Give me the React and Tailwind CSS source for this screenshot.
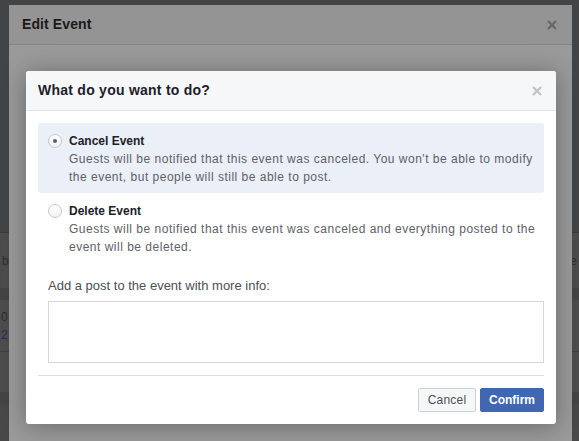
import React, { useState } from "react";

const font = { fontFamily: '"Liberation Sans", Arial, Helvetica, sans-serif' };

function CloseIcon({ className }) {
  return (
    <svg width="10" height="10" viewBox="0 0 10 10" className={className}>
      <path d="M1 1 L9 9 M9 1 L1 9" stroke="currentColor" strokeWidth="2.2" strokeLinecap="butt" />
    </svg>
  );
}

function Radio({ checked }) {
  return (
    <span className="mt-[2px] flex h-[14px] w-[14px] shrink-0 items-center justify-center rounded-full border border-[#c4c7cc] bg-gradient-to-b from-white to-[#f1f2f4]">
      {checked && <span className="h-[4px] w-[4px] rounded-full bg-[#5b5f66]" />}
    </span>
  );
}

function Option({ title, desc, checked, onSelect }) {
  return (
    <div
      onClick={onSelect}
      className={`flex cursor-pointer gap-[7px] rounded-[3px] pl-[10px] pr-[6px] pt-[9px] pb-[7px] ${
        checked ? "bg-[#ebeff7]" : ""
      }`}
    >
      <Radio checked={checked} />
      <div className="text-[12px] leading-[18px]">
        <div className="font-bold text-[#1d2129]">{title}</div>
        <div className="tracking-[0.5px] text-[#5d6169]">{desc}</div>
      </div>
    </div>
  );
}

// dimmed page content peeking out on both sides of the dialog
function PageBehind() {
  return (
    <div className="flex h-full flex-col text-[12px]">
      <div className="h-[233px] shrink-0 border-b border-[#3a3a3b] bg-[#434446]" />
      <div className="flex h-[55px] shrink-0 items-center justify-between bg-[#4c4c4d] px-[2px] text-[#2e2e2e]">
        <span>b</span>
        <span>e</span>
      </div>
      <div className="h-[12px] shrink-0 bg-[#444445]" />
      <div className="flex h-[52px] shrink-0 flex-col justify-center border-b border-[#3f3f40] bg-[#4d4d4e] px-[1px] leading-[18px]">
        <span className="text-[#2c2c2c]">0</span>
        <span className="text-[#1f2f55]">2</span>
      </div>
      <div className="h-[40px] shrink-0 bg-[#4d4d4e]" />
      <div className="h-[12px] shrink-0 bg-[#444445]" />
      <div className="flex-1 bg-[#484849]" />
    </div>
  );
}

export default function App() {
  const [choice, setChoice] = useState("cancel");

  return (
    <div className="relative h-[441px] w-full overflow-hidden bg-[#434446]" style={font}>
      <PageBehind />

      <div className="absolute left-[9px] top-[5px] bottom-0 w-[563px] rounded-t-[3px] bg-[#9a9a9a]">
        <div className="flex h-[40px] items-center justify-between border-b border-[#858585] bg-[#949494] pl-[13px] pr-[15px]">
          <span className="text-[14px] font-bold tracking-[0.1px] text-[#1a1a1b]">Edit Event</span>
          <CloseIcon className="text-[#676767]" />
        </div>

        <div className="pl-[17px] pt-[26px]">
          <div className="w-[530px] rounded-[3px] bg-white shadow-[0_2px_24px_rgba(0,0,0,0.32)]">
            <div className="flex h-[40px] items-center justify-between rounded-t-[3px] border-b border-[#e5e5e5] bg-[#f6f7f9] pl-[12px] pr-[14px]">
              <span className="text-[14px] font-bold tracking-[0.25px] text-[#1d2129]">
                What do you want to do?
              </span>
              <CloseIcon className="text-[#bfc2c8]" />
            </div>

            <div className="p-[12px]">
              <Option
                title="Cancel Event"
                desc="Guests will be notified that this event was canceled. You won't be able to modify the event, but people will still be able to post."
                checked={choice === "cancel"}
                onSelect={() => setChoice("cancel")}
              />
              <Option
                title="Delete Event"
                desc="Guests will be notified that this event was canceled and everything posted to the event will be deleted."
                checked={choice === "delete"}
                onSelect={() => setChoice("delete")}
              />

              <div className="mt-[14px] pl-[10px]">
                <div className="text-[13px] leading-[18px] text-[#4b4f56]">
                  Add a post to the event with more info:
                </div>
                <textarea className="mt-[6px] block h-[62px] w-full resize-none border border-[#d3d6db] bg-white p-[4px] text-[12px] outline-none" />
              </div>

              <div className="mt-[12px] border-t border-[#dddfe2]" />

              <div className="mt-[12px] flex justify-end gap-[4px]">
                <button className="h-[24px] w-[58px] rounded-[2px] border border-[#ced0d4] bg-[#f6f7f9] text-[12px] tracking-[0.2px] text-[#4b4f56]">
                  Cancel
                </button>
                <button className="h-[24px] w-[64px] rounded-[2px] border border-[#4267b2] bg-[#4267b2] text-[12px] font-bold text-white">
                  Confirm
                </button>
              </div>
            </div>
          </div>
        </div>
      </div>
    </div>
  );
}
